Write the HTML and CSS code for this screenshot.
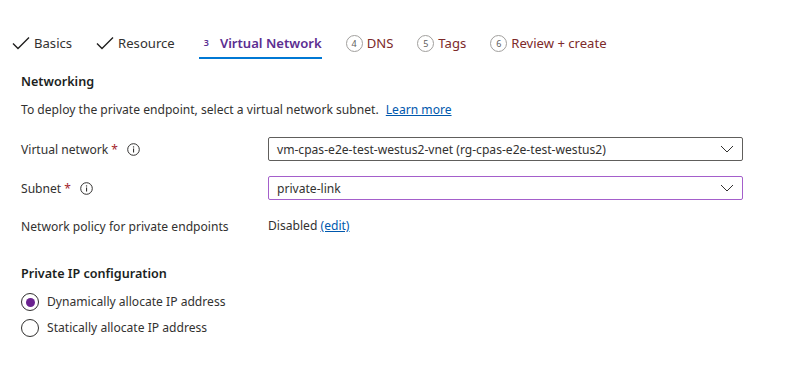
FILE: index.html
```html
<!DOCTYPE html>
<html>
<head>
<meta charset="utf-8">
<link rel="stylesheet" href="styles.css">
</head>
<body>
<nav class="tabs">
  <div class="tab done">
    <svg class="check" width="18" height="14" viewBox="0 0 18 14"><path d="M1 7.5 L6 12.5 L17 1.5" fill="none" stroke="#201f1e" stroke-width="1.4"/></svg>
    <span>Basics</span>
  </div>
  <div class="tab done">
    <svg class="check" width="18" height="14" viewBox="0 0 18 14"><path d="M1 7.5 L6 12.5 L17 1.5" fill="none" stroke="#201f1e" stroke-width="1.4"/></svg>
    <span>Resource</span>
  </div>
  <div class="tab active">
    <span class="num">3</span>
    <span>Virtual Network</span>
  </div>
  <div class="tab todo">
    <span class="circ">4</span>
    <span>DNS</span>
  </div>
  <div class="tab todo">
    <span class="circ">5</span>
    <span>Tags</span>
  </div>
  <div class="tab todo">
    <span class="circ">6</span>
    <span>Review + create</span>
  </div>
</nav>

<main class="content">
  <h2 class="heading first">Networking</h2>
  <p class="desc">To deploy the private endpoint, select a virtual network subnet. <a class="link learn" href="#">Learn more</a></p>

  <div class="row r1">
    <div class="label">Virtual network <span class="req">*</span>
      <svg class="info" width="13" height="13" viewBox="0 0 13 13"><circle cx="6.5" cy="6.5" r="5.8" fill="none" stroke="#323130" stroke-width="1"/><rect x="6" y="5.5" width="1.1" height="4" fill="#323130"/><circle cx="6.55" cy="3.9" r="0.7" fill="#323130"/></svg>
    </div>
    <div class="select">
      <span>vm-cpas-e2e-test-westus2-vnet (rg-cpas-e2e-test-westus2)</span>
      <svg class="chev" width="14" height="8" viewBox="0 0 14 8"><path d="M1 1 L7 7 L13 1" fill="none" stroke="#323130" stroke-width="1"/></svg>
    </div>
  </div>

  <div class="row r2">
    <div class="label">Subnet <span class="req">*</span>
      <svg class="info" width="13" height="13" viewBox="0 0 13 13"><circle cx="6.5" cy="6.5" r="5.8" fill="none" stroke="#323130" stroke-width="1"/><rect x="6" y="5.5" width="1.1" height="4" fill="#323130"/><circle cx="6.55" cy="3.9" r="0.7" fill="#323130"/></svg>
    </div>
    <div class="select focus">
      <span>private-link</span>
      <svg class="chev" width="14" height="8" viewBox="0 0 14 8"><path d="M1 1 L7 7 L13 1" fill="none" stroke="#323130" stroke-width="1"/></svg>
    </div>
  </div>

  <div class="row r3">
    <div class="label">Network policy for private endpoints</div>
    <div class="value">Disabled <a class="link" href="#">(edit)</a></div>
  </div>

  <h2 class="heading second">Private IP configuration</h2>
  <div class="radio r-first"><span class="dot on"></span><span>Dynamically allocate IP address</span></div>
  <div class="radio r-second"><span class="dot"></span><span>Statically allocate IP address</span></div>
</main>
</body>
</html>
```

FILE: styles.css
```css
* { box-sizing: border-box; }
html, body { margin: 0; padding: 0; background: #fff; }
body {
  font-family: "Noto Sans", "Open Sans", sans-serif;
  font-size: 12.1px;
  color: #323130;
  width: 796px;
  height: 365px;
  overflow: hidden;
}

.tabs {
  display: flex;
  gap: 24px;
  padding: 33px 0 0 12px;
}
.tab {
  display: flex;
  align-items: center;
  height: 26px;
  padding-bottom: 4px;
  border-bottom: 2px solid transparent;
  font-size: 13.1px;
  line-height: 20px;
  white-space: nowrap;
}
.tab .check { margin-right: 4px; }
.tab.done { color: #323130; }
.tab.active {
  border-bottom-color: #0078d4;
  color: #5c2e91;
  font-weight: 600;
  padding-left: 5px;
}
.tab.active .num {
  font-size: 9px;
  font-weight: 600;
  margin-right: 11px;
  line-height: 10px;
}
.tab.todo { color: #7d2a2a; }
.circ {
  display: inline-flex;
  align-items: center;
  justify-content: center;
  width: 17px;
  height: 17px;
  border: 1px solid #a19f9d;
  border-radius: 50%;
  font-size: 9px;
  color: #605e5c;
  margin-right: 4px;
  line-height: 1;
}

.content { padding-left: 21px; }
.heading {
  margin: 0;
  font-size: 12.6px;
  font-weight: 600;
  line-height: 20px;
  color: #201f1e;
}
.heading.first { margin-top: 13px; }
.heading.second { margin-top: 26px; }
.desc {
  margin: 8px 0 0;
  line-height: 20px;
}
.link { color: #0058ad; text-decoration: underline; }
.learn { margin-left: 4px; }

.row {
  display: grid;
  grid-template-columns: 247px 475px;
  align-items: center;
  height: 24px;
}
.r1 { margin-top: 17px; }
.r2 { margin-top: 15px; }
.r3 { margin-top: 14px; }
.label { display: flex; align-items: center; white-space: nowrap; }
.req { color: #a4262c; margin-left: 3px; }
.info { margin-left: 9px; }

.select {
  height: 24px;
  border: 1px solid #605e5c;
  border-radius: 2px;
  display: flex;
  align-items: center;
  justify-content: space-between;
  padding: 0 8px 0 8px;
  white-space: nowrap;
}
.select.focus { border-color: #a45fcb; }
.value { line-height: 20px; }

.radio {
  display: flex;
  align-items: center;
  height: 20px;
  line-height: 20px;
}
.r-first { margin-top: 8px; }
.r-second { margin-top: 6px; }
.dot {
  width: 18px;
  height: 18px;
  border: 1px solid #323130;
  border-radius: 50%;
  margin-right: 8px;
  display: inline-flex;
  align-items: center;
  justify-content: center;
}
.dot.on::after {
  content: "";
  width: 9px;
  height: 9px;
  border-radius: 50%;
  background: #6b2390;
}
```
